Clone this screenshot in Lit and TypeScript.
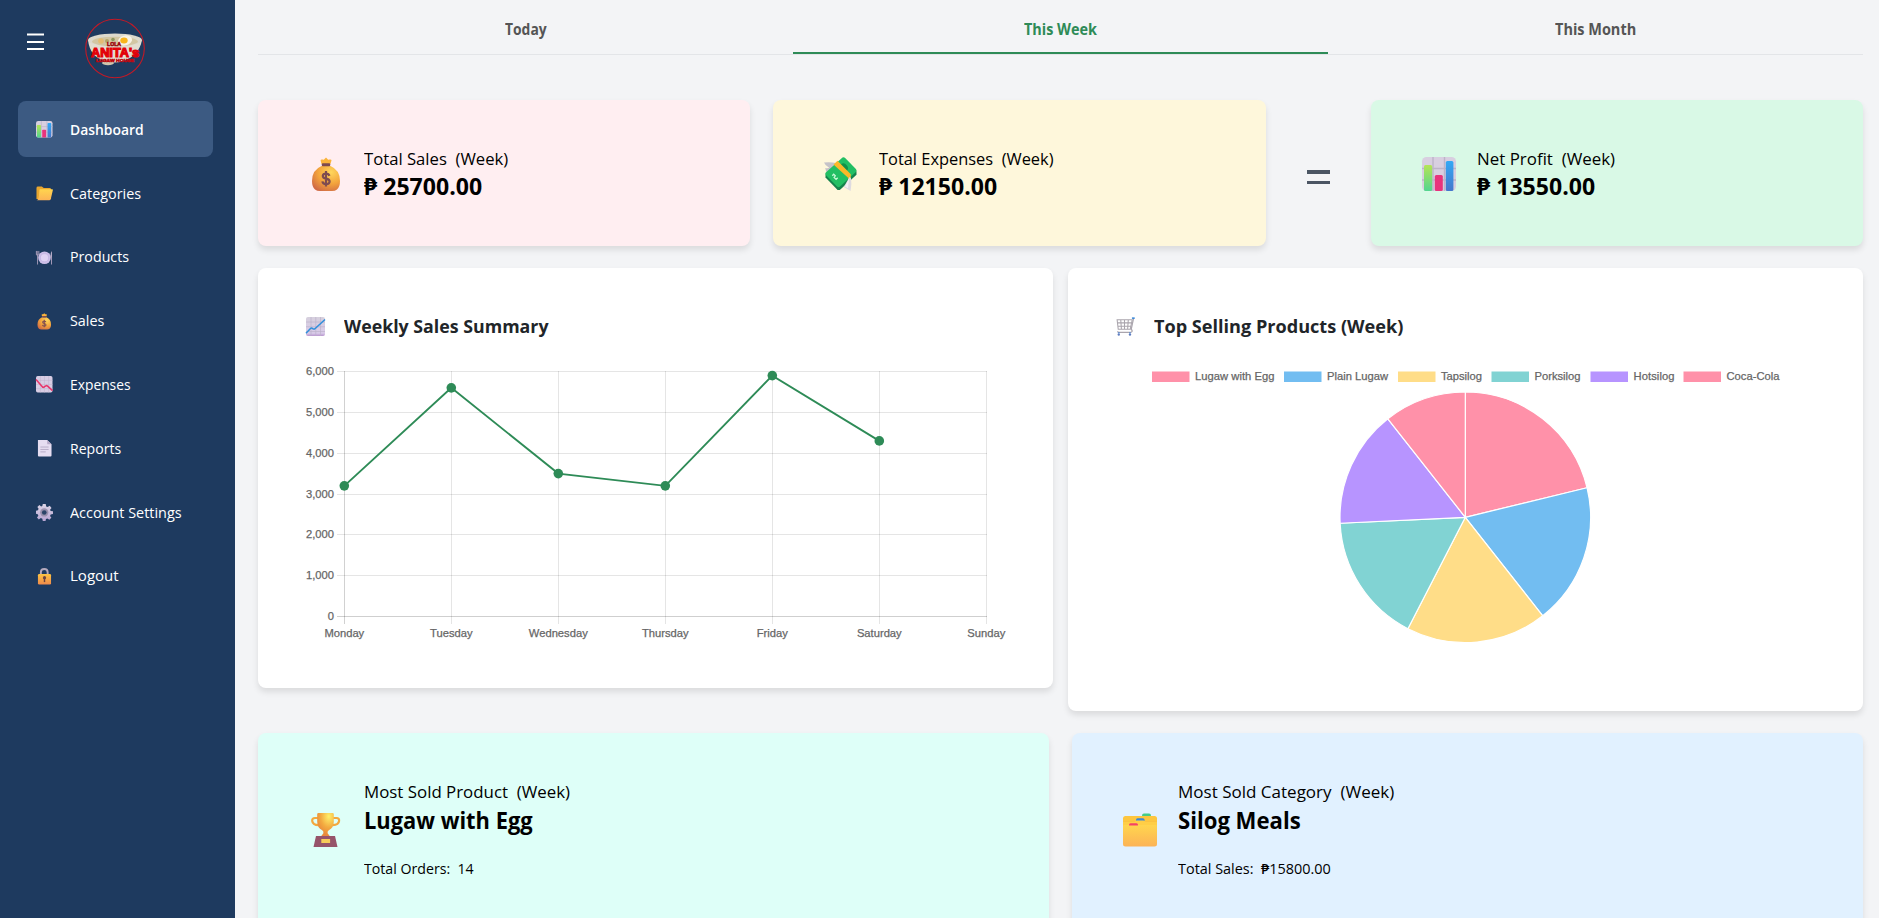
import { LitElement, html, svg, css } from "lit";
import { customElement, property } from "lit/decorators.js";
import { classMap } from "lit/directives/class-map.js";

const icons: Record<string, unknown> = {
  bars: svg`
    <rect width="34" height="34" rx="4.5" fill="#d8cfe0"/>
    <path d="M11 0v34M22.5 0v34M0 11.5h34M0 23h34" stroke="#bdb4c8" stroke-width="1.4"/>
    <rect x="2" y="8" width="8.2" height="26" rx="1.5" fill="url(#gGreen)"/>
    <rect x="12.8" y="18" width="8" height="16" rx="1.5" fill="#e8337c"/>
    <rect x="23.8" y="4" width="7.6" height="30" rx="1.5" fill="url(#gBlue)"/>`,
  folder: svg`
    <path d="M1 6q0-3 3-3h8l4 3h12q3 0 3 3v20H1z" fill="#e9a62f"/>
    <path d="M8.500 8.500h25q1.800 0 1.200 2.200l-4.400 18.500q-.6 2.300-3 2.300H1q4-1 5-9l1-11.500q.2-2.500 1.500-2.500z" fill="url(#gGold)"/>`,
  plate: svg`
    <circle cx="17.500" cy="18" r="13" fill="#cdbfe8"/><circle cx="17.500" cy="18" r="8.300" fill="#e0d3f4" stroke="#b9a8dc" stroke-width="1"/>
    <path d="M2.500 4v9M0.800 4v8h5V4M3.200 12v20" stroke="#a99dbb" stroke-width="1.900" fill="none"/>
    <path d="M33 4q-3.500 3-3.200 14h3.200z" fill="#b5aac6"/><path d="M32 16v16" stroke="#a99dbb" stroke-width="2"/>`,
  bag: svg`
    <path d="M12.500 7 11.600 3.500q0-1.500 2-1l1.200.2L17 .4l2.200 2.300 1.300-.2q2-.4 2 1L21.400 7z" fill="#fbb43b"/>
    <path d="M12.500 9h9Q31 13 31 24q0 6-3 8.400-1.800 1.600-5 1.600H11q-3.200 0-5-1.600Q3 30 3 24 3 13 12.500 9z" fill="url(#gBag)"/>
    <rect x="12.800" y="6.200" width="8.400" height="3" rx="1" fill="#7e4b50"/>
    <path d="M20.400 18.900q-.6-2.300-3.400-2.300-3.200 0-3.200 2.400 0 2.100 3.200 2.600 3.600.6 3.600 2.900 0 2.600-3.500 2.600-3.400 0-3.700-2.700M17 14v15.600" stroke="#7e4b50" stroke-width="2.200" fill="none"/>`,
  down: svg`
    <rect width="34" height="34" rx="3.500" fill="#d8cde4"/>
    <path d="M9 0v34M17.500 0v34M26 0v34M0 9h34M0 17.500h34M0 26h34" stroke="#c2b6d0" stroke-width="1.100"/>
    <path d="M0 7 13 22q2 2.500 4 .5l3-2q2-1.500 4 .5l10 9" stroke="#e8366c" stroke-width="3.200" fill="none"/>`,
  up: svg`
    <rect width="34" height="34" rx="3.500" fill="url(#gLilac)"/>
    <path d="M9 0v34M17.500 0v34M26 0v34M0 9h34M0 17.500h34M0 26h34" stroke="#bcb1cb" stroke-width="1.200"/>
    <path d="M0 29 8 20.500q2-1.800 4 .3 2.500 1.700 4.500-.3L34 4.500" stroke="#2f8fdb" stroke-width="2.700" fill="none"/>`,
  doc: svg`
    <path d="M4 0h19l9 9v23q0 2-2 2H6q-2 0-2-2z" fill="#e6ddf1"/><path d="M23 0v7q0 2 2 2h7z" fill="#b7aac8"/>
    <path d="M9 14.500h17M9 19.500h17M9 24.500h11" stroke="#b2a7c2" stroke-width="1.800"/>`,
  gear: svg`
    <path d="M14 0h6l1 5 3 1.300L28.300 3.500 32 8l-3 3.800 1.200 2.700 4.800.5v5.500l-4.800 1L29 24.500l2.700 4-4.200 4-4-2.800-2.900 1.200-1 4.100H14l-1-4.600-3-1.300L5.800 32 2 28l2.800-4L3.600 21 0 20v-6l4-1 1.300-3L2.800 6 7 2.200l3.500 2.900L13 4.300z" fill="url(#gGear)"/>
    <circle cx="17" cy="17.500" r="8.500" fill="#9a91ad"/><circle cx="17" cy="17.500" r="4.800" fill="#2c4568"/>`,
  lock: svg`
    <path d="M10 16V9q0-7 7-7t7 7v7" stroke="#b5a9bd" stroke-width="4" fill="none"/>
    <rect x="4" y="12.500" width="27" height="21.500" rx="2.500" fill="url(#gBag2)"/>
    <circle cx="17.500" cy="20" r="3.300" fill="#6b4340"/><path d="M17.500 21v8" stroke="#6b4340" stroke-width="3"/>`,
  wings: svg`
    <path d="M0 5.500q7-.6 12 .5L3.500 17Q1.800 14.500 1.200 11q3 .5 4-.3Q1 8.500 0 5.500z" fill="#c5c3c8"/>
    <path d="M19 1.500 32.500 14.500v3.200L15.800 33h-2.200L1.500 20.500v-3z" fill="#14834c"/>
    <path d="M18.500.6q1.200-1 2.400.2l11 11.300q1.500 1.400 0 3L16 29.400q-1.500 1.500-3 0L1.800 18q-1.200-1.200 0-2.500z" fill="#22bf63"/>
    <ellipse cx="19.800" cy="10.600" rx="3.800" ry="4.300" fill="#129149" transform="rotate(-40 19.800 10.600)"/>
    <path d="m9.500 7.500 4-3.700 13.300 13.500-.2 6.800-2.500 1.800.2-4.800z" fill="#fbb829"/>
    <path d="m8.300 18.800 1.400-1.500 1.600 1.600-1.200 1.500 2 2 1.600-1.600" stroke="#c7f8d6" stroke-width="1.300" fill="none"/>
    <path d="M25.500 20 19.800 30l6.800 3.900q1.400-7 .4-13z" fill="#dedbe0"/><path d="M25 21.500 21 29.500l3 1.800z" fill="#f3f0f4"/>`,
  cart: svg`
    <path d="M2 5h27l-3.500 17H4zM8.500 5l1.200 17M15.200 5v17M22 5l-1.200 17M2.500 10.500h25M3.300 16.500h23.500" stroke="#aaa5ad" stroke-width="1.900" fill="none"/>
    <path d="M31.500 2 27.200 22q3.200 3 .5 5-1.500 1-22 .5-3-.5-2.700-2" stroke="#aaa5ad" stroke-width="2.200" fill="none"/>
    <path d="M28.500 2h5" stroke="#3183d8" stroke-width="2.600"/><path d="M5 27.500v2M25 27.500v2" stroke="#5486ce" stroke-width="3.200"/>
    <circle cx="5" cy="31.500" r="2.100" fill="#5d7cc0"/><circle cx="25" cy="31.500" r="2.100" fill="#5d7cc0"/>`,
  trophy: svg`
    <path d="M9 5H6Q3 5 3.200 7.800q.4 4 6.500 4.400M24 5H27.500q2.900 0 2.600 2.800-.4 4-6.500 4.400" stroke="#f3a83e" stroke-width="2.200" fill="none"/>
    <path d="M8.200 1.200Q8.200 0 9.500 0h14q1.300 0 1.300 1.200v7.300q0 6.500-5 8.700-1.600.9-1.200 3l2.300 3h-8.800l2.300-3q.4-2.100-1.200-3-5-2.200-5-8.700z" fill="url(#gCup)"/>
    <path d="M7 23h19l2.500 11h-24z" fill="#96546a"/><rect x="12.300" y="26" width="8.800" height="4" fill="#f7cc5a"/>`,
  dividers: svg`
    <rect x="19" y=".5" width="9" height="5" rx="2" fill="#45cc86"/>
    <rect y="3" width="34" height="24" rx="2.500" fill="#fdc63f"/><path d="M0 8.500h34" stroke="#f4b43a" stroke-width=".8"/>
    <rect x="13" y="5.300" width="8.500" height="4" rx="1.500" fill="#3d87d4"/>
    <path d="M0 8.500h11.500l2-.9h7l2 .9H34v8H0z" fill="#ffce46"/>
    <rect x="6" y="10.300" width="9" height="4" rx="1.500" fill="#f54266"/>
    <path d="M0 13.200q0-1.200 1.200-1.200h3.600l1.600.6h8.200l1.600-.6h16.600q1.200 0 1.200 1.200V31q0 2.500-2.500 2.500h-29Q0 33.500 0 31z" fill="url(#gGold)"/>`,
};

@customElement("emoji-icon")
class EmojiIcon extends LitElement {
  @property() name = "";
  static styles = css`
    :host { display: block; flex: none; }
    svg { display: block; width: 100%; height: 100%; overflow: visible; }
  `;
  render() {
    return html`<svg viewBox="0 0 34 34">
      <defs>
        <linearGradient id="gGreen" x2="0" y2="1"><stop stop-color="#b4e455"/><stop offset="1" stop-color="#52d590"/></linearGradient>
        <linearGradient id="gBlue" x2="0" y2="1"><stop stop-color="#33a9f5"/><stop offset="1" stop-color="#4577cc"/></linearGradient>
        <linearGradient id="gGold" x2="0" y2="1"><stop stop-color="#ffd54e"/><stop offset="1" stop-color="#fcb356"/></linearGradient>
        <linearGradient id="gLilac" x2="0" y2="1"><stop stop-color="#d6d0dd"/><stop offset=".85" stop-color="#d9cbe9"/><stop offset="1" stop-color="#b996cf"/></linearGradient>
        <linearGradient id="gGear" x2="0" y2="1"><stop stop-color="#dcd5e6"/><stop offset="1" stop-color="#b8a5d2"/></linearGradient>
        <linearGradient id="gBag2" x2="0" y2="1"><stop stop-color="#fbc343"/><stop offset="1" stop-color="#f08a4b"/></linearGradient>
        <radialGradient id="gBag" cx=".68" cy=".25" r=".85"><stop stop-color="#ffd75c"/><stop offset=".55" stop-color="#f3a33c"/><stop offset="1" stop-color="#d06a45"/></radialGradient>
        <radialGradient id="gCup" cx=".7" cy=".15" r=".8"><stop stop-color="#fff06a"/><stop offset=".6" stop-color="#f3aa40"/><stop offset="1" stop-color="#e98a3c"/></radialGradient>
      </defs>
      ${icons[this.name]}
    </svg>`;
  }
}

/* One line of text condensed or widened to exactly the given width. */
@customElement("fit-text")
class FitText extends LitElement {
  @property() text = "";
  @property({ type: Number }) width = 0;
  static styles = css`
    :host { display: block; }
    span { display: inline-block; white-space: pre; transform-origin: 0 50%; }
  `;
  firstUpdated() {
    this.style.width = `${this.width}px`;
    const span = this.renderRoot.querySelector("span")!;
    span.style.transform = `scaleX(${(this.width / span.offsetWidth).toFixed(4)})`;
  }
  render() {
    return html`<span>${this.text}</span>`;
  }
}

const nav: [string, string, number][] = [
  ["bars", "Dashboard", 74],
  ["folder", "Categories", 71],
  ["plate", "Products", 59],
  ["bag", "Sales", 34],
  ["down", "Expenses", 61],
  ["doc", "Reports", 51],
  ["gear", "Account Settings", 112],
  ["lock", "Logout", 48.5],
];

const days = ["Monday", "Tuesday", "Wednesday", "Thursday", "Friday", "Saturday", "Sunday"];
const sales = [3200, 5600, 3500, 3200, 5900, 4300];
const gx = (i: number) => 86.3 + i * 107;
const gy = (v: number) => 266.5 - (v * 245) / 6000;

const slices = [
  { name: "Lugaw with Egg", n: 14, color: "#ff91a9", x: 84, tx: 127, w: 79.500 },
  { name: "Plain Lugaw", n: 12, color: "#72bdf1", x: 216, tx: 259, w: 61 },
  { name: "Tapsilog", n: 12, color: "#ffdd88", x: 330, tx: 373, w: 41 },
  { name: "Porksilog", n: 11, color: "#81d3d3", x: 423.5, tx: 466.500, w: 46 },
  { name: "Hotsilog", n: 10, color: "#b794ff", x: 522.5, tx: 565.5, w: 41 },
  { name: "Coca-Cola", n: 7, color: "#ff91a9", x: 615.5, tx: 658.5, w: 53 },
];

@customElement("app-root")
class AppRoot extends LitElement {
  static styles = css`
    :host {
      display: flex;
      height: 918px;
      overflow: hidden;
      background: #f3f4f6;
      color: #000;
      font-family: "Open Sans", "Noto Sans", sans-serif;
    }
    * { box-sizing: border-box; }
    .side { flex: none; width: 235px; background: #1e3a5f; padding: 18px 22px 0 18px; color: #fff; }
    .brand { display: flex; height: 83px; padding-left: 9px; }
    .burger { width: 18px; height: 18px; margin-top: 15px; }
    .logo { width: 62px; height: 62px; margin-left: 39px; }
    .logo text { font-family: "Liberation Sans", sans-serif; font-weight: 700; }
    .nav { display: flex; flex-direction: column; gap: 8px; }
    .item {
      display: flex; align-items: center; height: 55.8px; padding-left: 18px; gap: 17.5px;
      border-radius: 8px; font-size: 15.2px; line-height: 24px;
    }
    .item.on { background: #3c5a82; font-weight: 600; }
    .item emoji-icon { width: 16.5px; height: 16.5px; margin-top: 1px; }
    .main { flex: 1; min-width: 0; padding: 0 16px 0 23px; }
    .tabs { display: flex; height: 55px; border-bottom: 1px solid #e3e5e8; }
    .tab {
      flex: 1; display: flex; justify-content: center; padding-top: 17px; height: 54px;
      font-size: 15.2px; font-weight: 700; line-height: 24px; color: #555;
    }
    .tab.on { color: #2e8b57; border-bottom: 2px solid #2e8b57; }
    .card { border-radius: 8px; box-shadow: 0 4px 6px rgba(0, 0, 0, 0.1); }
    .totals { display: flex; margin-top: 45px; height: 146px; }
    .stat { display: flex; flex: 1; gap: 21px; padding: 47px 0 0 51px; }
    .stat emoji-icon { width: 34px; height: 34px; margin-top: 10px; }
    .totals .stat + .stat { margin-left: 23px; }
    .pink { background: #ffeef1; }
    .cream { background: #fef7db; }
    .green { background: #d9f9e6; }
    .equals { flex: none; width: 105px; display: flex; flex-direction: column; justify-content: center; align-items: center; gap: 7px; padding-top: 8px; }
    .equals i { width: 23px; height: 3.4px; background: #4b5563; }
    .label { font-size: 16.8px; line-height: 24px; font-weight: 500; }
    .value { font-size: 22.400px; line-height: 32px; font-weight: 700; }
    .charts { display: flex; gap: 15px; margin-top: 22px; height: 443px; align-items: flex-start; }
    .chart { flex: 1; background: #fff; height: 443px; }
    .chart.short { height: 420px; }
    .head { display: flex; gap: 19px; height: 82px; padding: 44px 0 0 48px; font-size: 17.6px; line-height: 28px; font-weight: 700; color: #212529; }
    .head emoji-icon { width: 19px; height: 19px; margin-top: 5px; }
    .plot {
      display: block; width: 795px; height: 300px; font-family: "Liberation Sans", Arial, sans-serif;
      font-size: 11.2px; fill: #666;
    }
    .plot text { stroke: #666; stroke-width: 0.25px; }
    .bests { display: flex; gap: 23px; margin-top: 22px; }
    .best { height: 230px; padding-top: 47px; }
    .best emoji-icon { margin-top: 33px; }
    .best .value { margin-top: 1px; }
    .mint { background: #defff8; }
    .sky { background: #e1f1ff; }
    .sub { font-size: 15.2px; line-height: 24px; margin-top: 19px; font-weight: 500; }
  `;

  stat(icon: string, label: string, lw: number, value: string, vw: number, tone: string) {
    return html`<div class="card stat ${tone}">
      <emoji-icon name=${icon}></emoji-icon>
      <div>
        <fit-text class="label" .text=${label} .width=${lw}></fit-text>
        <fit-text class="value" .text=${value} .width=${vw}></fit-text>
      </div>
    </div>`;
  }

  best(icon: string, label: string, lw: number, value: string, vw: number, sub: string, sw: number, tone: string) {
    return html`<div class="card stat best ${tone}">
      <emoji-icon name=${icon}></emoji-icon>
      <div>
        <fit-text class="label" .text=${label} .width=${lw}></fit-text>
        <fit-text class="value" .text=${value} .width=${vw}></fit-text>
        <fit-text class="sub" .text=${sub} .width=${sw}></fit-text>
      </div>
    </div>`;
  }

  linePlot() {
    return html`<svg class="plot" viewBox="0 0 795 300">
      ${[0, 1, 2, 3, 4, 5, 6].map((k) => {
        const y = Math.floor(gy(k * 1000)) + 0.5;
        return svg`<path d="M79 ${y}H729" stroke=${k ? "#e5e5e5" : "#cfcfcf"}/>
          <text x="76" y=${y + 3.700} text-anchor="end">${(k * 1000).toLocaleString("en-US")}</text>`;
      })}
      ${days.map((d, i) => svg`<path d="M${Math.floor(gx(i)) + 0.5} 21V274" stroke="#000" stroke-opacity=${i ? 0.1 : 0.18}/>
        <text x=${gx(i)} y="287" text-anchor="middle">${d}</text>`)}
      <polyline points=${sales.map((v, i) => `${gx(i)},${gy(v)}`).join(" ")} fill="none" stroke="#2e8b57" stroke-width="1.9"/>
      ${sales.map((v, i) => svg`<circle cx=${gx(i)} cy=${gy(v)} r="4.800" fill="#2e8b57"/>`)}
    </svg>`;
  }

  pie() {
    const cx = 397.3, cy = 167.3, r = 125.3;
    let acc = 0;
    const at = (n: number) => {
      const a = (n / 66) * Math.PI * 2;
      return `${(cx + r * Math.sin(a)).toFixed(2)} ${(cy - r * Math.cos(a)).toFixed(2)}`;
    };
    return html`<svg class="plot" viewBox="0 0 795 300">
      ${slices.map((s) => svg`<rect x=${s.x} y="21.500" width="37.500" height="10.500" fill=${s.color}/>
        <text x=${s.tx} y="30" textLength=${s.w}>${s.name}</text>`)}
      ${slices.map((s) => {
        const a = at(acc);
        acc += s.n;
        return svg`<path d="M${cx} ${cy}L${a}A${r} ${r} 0 0 1 ${at(acc)}Z" fill=${s.color} stroke="#fff" stroke-width="1.200" stroke-linejoin="round"/>`;
      })}
    </svg>`;
  }

  render() {
    return html`
      <aside class="side">
        <div class="brand">
          <svg class="burger" viewBox="0 0 18 18"><path d="M0 1.500h17M0 9h17M0 16h17" stroke="#fff" stroke-width="1.900"/></svg>
          <svg class="logo" viewBox="84 18 62 62">
            <path d="M88 40q2 17 17 21 9 3 18 0 16-5 19-21z" fill="#e3ded0"/>
            <ellipse cx="115" cy="40" rx="27" ry="6.500" fill="#dcd9cd"/>
            <ellipse cx="115" cy="41.500" rx="23" ry="4.800" fill="#d3c7a3"/>
            <circle cx="101" cy="41" r="2.800" fill="#e4bd73"/><circle cx="107" cy="41" r="2" fill="#b3a468"/><circle cx="113" cy="39.500" r="1.800" fill="#8f985f"/>
            <ellipse cx="125" cy="40.500" rx="7.200" ry="5" fill="#f8f3e6" transform="rotate(-15 125 40.500)"/>
            <ellipse cx="124" cy="40.500" rx="3.700" ry="3" fill="#f9b51c"/>
            <ellipse cx="108" cy="63" rx="6" ry="2.200" fill="#cfc5ae"/>
            <circle cx="115" cy="48.500" r="29.300" fill="none" stroke="#c31926" stroke-width="1.100"/>
            <g fill="#f3080c" stroke="#8d0b12" stroke-width=".5">
              <text x="107" y="46" font-size="5" textLength="14" lengthAdjust="spacingAndGlyphs">LOLA</text>
              <text x="91" y="57.200" font-size="12" textLength="48" lengthAdjust="spacingAndGlyphs" stroke="#e00008" stroke-width="1.100">ANITA's</text>
              <text x="96" y="62.300" font-size="4.200" textLength="38" lengthAdjust="spacingAndGlyphs" stroke="#b80a12">LUGAW HOUSE</text>
            </g>
          </svg>
        </div>
        <nav class="nav">
          ${nav.map(([icon, label, w], i) => html`<a class=${classMap({ item: true, on: i === 0 })}>
            <emoji-icon name=${icon}></emoji-icon>
            <fit-text .text=${label} .width=${w}></fit-text>
          </a>`)}
        </nav>
      </aside>
      <main class="main">
        <div class="tabs">
          <div class="tab"><fit-text .text=${"Today"} .width=${42}></fit-text></div>
          <div class="tab on"><fit-text .text=${"This Week"} .width=${73}></fit-text></div>
          <div class="tab"><fit-text .text=${"This Month"} .width=${81}></fit-text></div>
        </div>
        <section class="totals">
          ${this.stat("bag", "Total Sales  (Week)", 144, "₱ 25700.00", 118.5, "pink")}
          ${this.stat("wings", "Total Expenses  (Week)", 175, "₱ 12150.00", 118.5, "cream")}
          <div class="equals"><i></i><i></i></div>
          ${this.stat("bars", "Net Profit  (Week)", 138, "₱ 13550.00", 118.5, "green")}
        </section>
        <section class="charts">
          <div class="card chart short">
            <div class="head"><emoji-icon name="up"></emoji-icon><fit-text .text=${"Weekly Sales Summary"} .width=${204}></fit-text></div>
            ${this.linePlot()}
          </div>
          <div class="card chart">
            <div class="head"><emoji-icon name="cart"></emoji-icon><fit-text .text=${"Top Selling Products (Week)"} .width=${249}></fit-text></div>
            ${this.pie()}
          </div>
        </section>
        <section class="bests">
          ${this.best("trophy", "Most Sold Product  (Week)", 206, "Lugaw with Egg", 169, "Total Orders:  14", 110, "mint")}
          ${this.best("dividers", "Most Sold Category  (Week)", 216, "Silog Meals", 122.5, "Total Sales:  ₱15800.00", 153, "sky")}
        </section>
      </main>`;
  }
}
